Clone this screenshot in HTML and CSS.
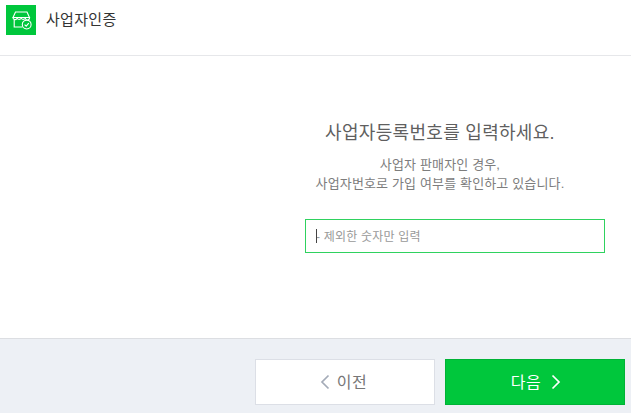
FILE: index.html
```html
<!DOCTYPE html>
<html lang="ko">
<head>
<meta charset="utf-8">
<title>사업자인증</title>
<link rel="stylesheet" href="styles.css">
</head>
<body>
<header class="top">
  <span class="logo">
    <svg class="logo-icon" width="20" height="20" viewBox="0 0 20 20" fill="none" stroke="#fff" stroke-width="1.1">
      <path d="M3.5 1h11.5l2.5 5.5H1z"/>
      <path d="M1 6.5a2.1 2.1 0 0 0 4.1.7 2.4 2.4 0 0 0 4.1 0 2.4 2.4 0 0 0 4.1 0 2.1 2.1 0 0 0 4.2-.7"/>
      <path d="M2.2 8.8v7.2h8.3M16.6 8.8v1"/>
      <circle cx="14.7" cy="13.6" r="4.4" fill="#00c73c"/>
      <path d="M12.6 13.6l1.6 1.6 2.6-3"/>
    </svg>
  </span>
  <h1 class="title">사업자인증</h1>
</header>
<main class="body">
  <section class="panel">
    <h2 class="heading">사업자등록번호를 입력하세요.</h2>
    <p class="desc">사업자 판매자인 경우,<br>사업자번호로 가입 여부를 확인하고 있습니다.</p>
    <div class="field"><span class="caret"></span><input class="input" type="text" placeholder="- 제외한 숫자만 입력"></div>
  </section>
</main>
<footer class="bottom">
  <button class="btn prev" type="button">
    <svg width="10" height="16" viewBox="0 0 10 16" fill="none" stroke="#a4abb8" stroke-width="1.7"><path d="M8.5 1.5L2 8l6.5 6.5"/></svg>
    <span class="btn-label">이전</span>
  </button>
  <button class="btn next" type="button">
    <span class="btn-label">다음</span>
    <svg width="10" height="16" viewBox="0 0 10 16" fill="none" stroke="#fff" stroke-width="1.7"><path d="M1.5 1.5L8 8l-6.5 6.5"/></svg>
  </button>
</footer>
</body>
</html>
```
FILE: styles.css
```css
* { box-sizing: border-box; }
html, body { margin: 0; height: 100%; }
body {
  width: 631px;
  height: 413px;
  overflow: hidden;
  display: flex;
  flex-direction: column;
  background: #fff;
  font-family: "Liberation Sans", "Noto Sans CJK KR", sans-serif;
}
.top {
  height: 56px;
  flex: none;
  display: flex;
  align-items: flex-start;
  padding: 5px 0 0 6px;
  gap: 10px;
  border-bottom: 1px solid #e6e7ea;
}
.logo {
  width: 30px;
  height: 30px;
  background: #00c73c;
  display: flex;
  align-items: center;
  justify-content: center;
}
.logo-icon { margin: 1px 0 0 1px; }
.title {
  margin: 0;
  font-size: 15px;
  font-weight: 400;
  line-height: 30px;
  letter-spacing: 0.3px;
  color: #333;
}
.body {
  flex: 1;
  display: flex;
  justify-content: flex-end;
  padding-right: 26px;
}
.panel {
  width: 330px;
  padding-top: 64px;
  text-align: center;
}
.heading {
  margin: 0;
  font-size: 18px;
  font-weight: 400;
  line-height: 26px;
  letter-spacing: 0.3px;
  color: #5f5f5f;
}
.desc {
  margin: 9px 0 0;
  font-size: 13px;
  line-height: 19px;
  letter-spacing: 0.15px;
  color: #7d7d7d;
}
.field {
  position: relative;
  height: 34px;
  margin: 26px 0 0 30px;
  border: 1px solid #2fd25f;
  display: flex;
  align-items: center;
  padding: 1px 0 0 10px;
}
.caret {
  position: absolute;
  left: 10px;
  top: 9px;
  width: 1px;
  height: 14px;
  background: #444;
}
.input {
  flex: 1;
  min-width: 0;
  border: 0;
  outline: 0;
  padding: 0;
  background: transparent;
  font: inherit;
  font-size: 12px;
  letter-spacing: 0.2px;
  color: #333;
}
.input::placeholder { color: #999; opacity: 1; }
.bottom {
  height: 75px;
  flex: none;
  display: flex;
  justify-content: flex-end;
  gap: 10px;
  padding: 20px 6px 8px 0;
  background: #edf0f5;
  border-top: 1px solid #dcdee2;
}
.btn {
  height: 46px;
  display: flex;
  align-items: center;
  justify-content: center;
  gap: 8px;
  font: inherit;
  font-size: 16px;
  letter-spacing: 0.5px;
  padding: 0;
}
.btn-label { margin-top: -3px; }
.prev {
  width: 180px;
  background: #fff;
  color: #777;
  border: 1px solid #dcdfe6;
  gap: 7px;
  padding-right: 3px;
}
.next {
  width: 180px;
  background: #00c73c;
  color: #fff;
  border: 1px solid #00b336;
  gap: 10px;
  padding-left: 2px;
}
```
